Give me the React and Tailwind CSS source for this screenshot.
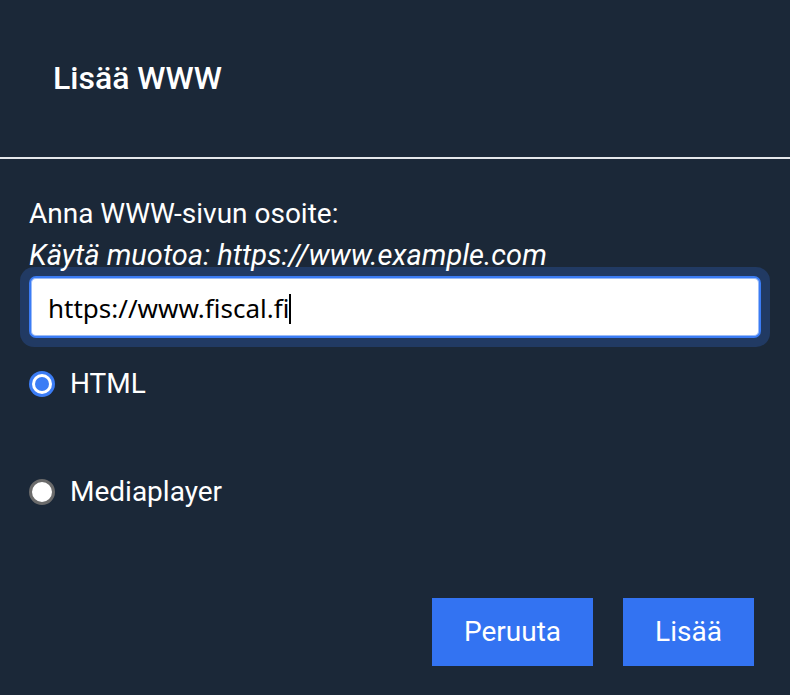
import React from "react";

const Radio = ({ checked, label }) => (
    <label className="flex items-center gap-[15px] h-[34px]">
        {checked ? (
            <span className="w-[26px] h-[26px] rounded-full bg-[#3b7cf5] flex items-center justify-center">
                <span className="w-[20px] h-[20px] rounded-full bg-white flex items-center justify-center">
                    <span className="w-[14px] h-[14px] rounded-full bg-[#3b7cf5]" />
                </span>
            </span>
        ) : (
            <span className="w-[26px] h-[26px] rounded-full bg-white border-[3px] border-[#6b6b6b]" />
        )}
        <span className="text-[28px] leading-[34px] text-white">{label}</span>
    </label>
);

const App = () => {
    return (
        <div className="w-[790px] h-[695px] bg-[#1b2838] flex flex-col font-['Roboto',sans-serif]">
            <div className="h-[157px] flex items-center px-[53px] pb-[2px]">
                <h1 className="text-[32px] font-medium text-white">Lisää WWW</h1>
            </div>
            <div className="h-[2px] bg-[#e5e7eb]" />

            <div className="flex-1 flex flex-col px-[29px] pt-[40px]">
                <p className="text-[28px] text-white leading-[30px]">Anna WWW-sivun osoite:</p>
                <p className="relative z-10 text-[29px] italic text-white leading-[24px] mt-[14px]">
                    Käytä muotoa: https://www.example.com
                </p>
                <div className="-mx-[9px] p-[9px] rounded-[14px] bg-[#213a63]">
                    <div className="h-[62px] bg-white rounded-[7px] border-2 border-[#3b7cf5] shadow-[inset_0_0_0_1px_#9cbcf7] flex items-center px-[17px] pt-[3px]">
                        <span className="text-[26px] text-black font-['Noto_Sans',sans-serif]">https://www.fiscal.fi</span>
                        <span className="w-[2px] h-[30px] bg-black" />
                    </div>
                </div>

                <div className="mt-[20px]">
                    <Radio checked label="HTML" />
                </div>
                <div className="mt-[74px]">
                    <Radio label="Mediaplayer" />
                </div>

                <div className="mt-auto mb-[29px] flex justify-end gap-[30px] pr-[7px]">
                    <button className="w-[161px] h-[68px] bg-[#3373f2] text-white text-[28px]">Peruuta</button>
                    <button className="w-[131px] h-[68px] bg-[#3373f2] text-white text-[28px]">Lisää</button>
                </div>
            </div>
        </div>
    );
};

export default App;
